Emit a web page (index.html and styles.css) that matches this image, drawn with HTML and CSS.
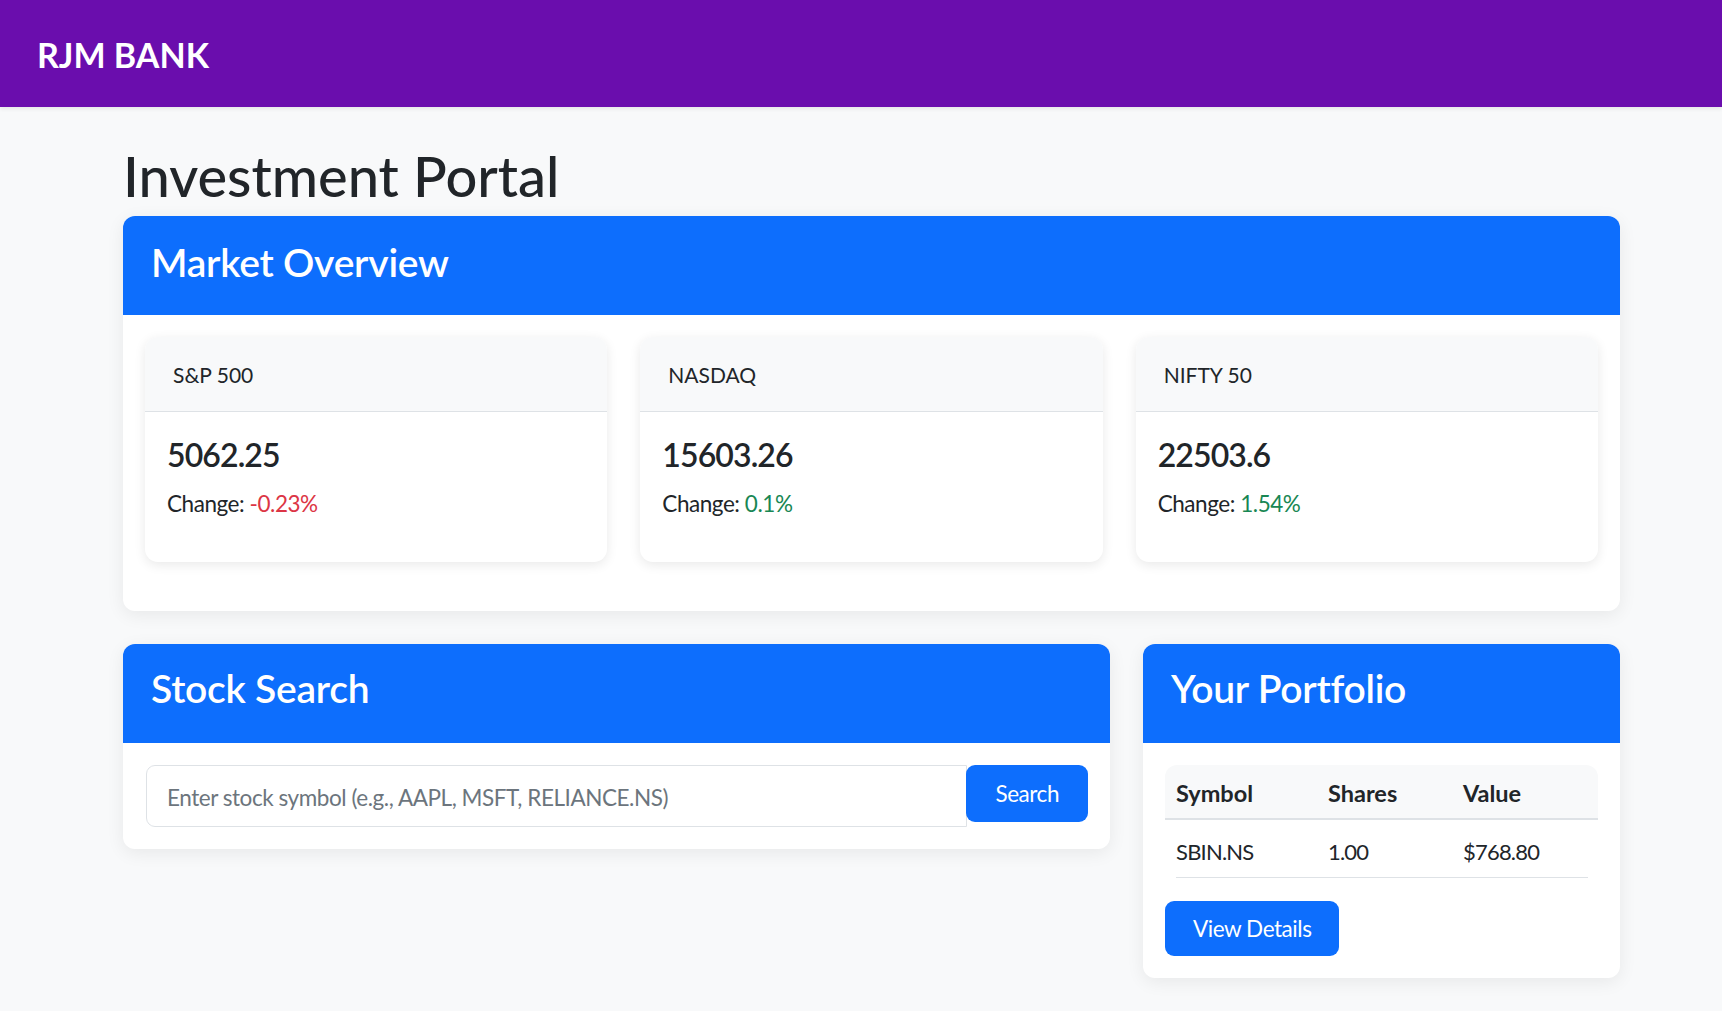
FILE: index.html
```html
<!DOCTYPE html>
<html lang="en">
<head>
<meta charset="utf-8">
<title>RJM BANK - Investment Portal</title>
<link rel="stylesheet" href="styles.css">
</head>
<body>
<nav class="navbar"><span class="brand">RJM BANK</span></nav>
<main class="page">
  <h1 class="page-title">Investment Portal</h1>

  <section class="panel">
    <header class="panel-head"><h2>Market Overview</h2></header>
    <div class="market-body">
      <div class="index-grid">
        <article class="index-card">
          <div class="index-head">S&amp;P 500</div>
          <div class="index-body">
            <div class="index-value">5062.25</div>
            <p class="index-change">Change: <span class="neg">-0.23%</span></p>
          </div>
        </article>
        <article class="index-card">
          <div class="index-head">NASDAQ</div>
          <div class="index-body">
            <div class="index-value">15603.26</div>
            <p class="index-change">Change: <span class="pos">0.1%</span></p>
          </div>
        </article>
        <article class="index-card">
          <div class="index-head">NIFTY 50</div>
          <div class="index-body">
            <div class="index-value">22503.6</div>
            <p class="index-change">Change: <span class="pos">1.54%</span></p>
          </div>
        </article>
      </div>
    </div>
  </section>

  <div class="lower-grid">
    <section class="panel">
      <header class="panel-head low"><h2>Stock Search</h2></header>
      <div class="search-body">
        <input class="search-input" type="text" placeholder="Enter stock symbol (e.g., AAPL, MSFT, RELIANCE.NS)">
        <button class="btn search-btn" type="button">Search</button>
      </div>
    </section>

    <section class="panel">
      <header class="panel-head low"><h2>Your Portfolio</h2></header>
      <div class="portfolio-body">
        <table class="holdings">
          <thead>
            <tr><th class="c1">Symbol</th><th class="c2">Shares</th><th class="c3">Value</th></tr>
          </thead>
          <tbody>
            <tr><td class="c1">SBIN.NS</td><td class="c2">1.00</td><td class="c3">$768.80</td></tr>
          </tbody>
        </table>
        <button class="btn details-btn" type="button">View Details</button>
      </div>
    </section>
  </div>
</main>
</body>
</html>
```

FILE: styles.css
```css
* { box-sizing: border-box; }

body {
  margin: 0;
  background: #f8f9fa;
  font-family: Lato, "Open Sans", sans-serif;
  font-size: 22.5px;
  color: #212529;
}

.navbar {
  height: 107px;
  background: #6a0dad;
  padding: 35px 0 0 37px;
  box-shadow: 0 2px 4px rgba(0, 0, 0, 0.08);
}

.brand {
  display: block;
  color: #fff;
  font-weight: 700;
  font-size: 34px;
  line-height: 40px;
}

.page {
  width: 1497px;
  margin-left: 123px;
  padding: 34.7px 0 30px;
}

.page-title {
  margin: 0 0 7px;
  font-size: 56px;
  line-height: 67.2px;
  font-weight: 500;
}

.panel {
  background: #fff;
  border-radius: 12px;
  box-shadow: 0 4px 18px rgba(0, 0, 0, 0.07);
  overflow: hidden;
}

.panel-head {
  background: #0d6efd;
  color: #fff;
  padding: 22px 28px 29px;
}

.panel-head.low {
  padding: 20px 28px 31px;
}

.panel-head h2 {
  margin: 0;
  font-size: 39px;
  line-height: 48px;
  font-weight: 600;
  letter-spacing: -0.25px;
}

.market-body {
  padding: 22px 22px 49px;
}

.index-grid {
  display: grid;
  grid-template-columns: repeat(3, 1fr);
  gap: 33px;
}

.index-card {
  background: #fff;
  border-radius: 13px;
  box-shadow: 0 3px 12px rgba(0, 0, 0, 0.09);
  overflow: hidden;
}

.index-head {
  background: #f8f9fa;
  padding: 22px 28px 20px;
  font-size: 21px;
  line-height: 32px;
  border-bottom: 1px solid #dee2e6;
}

.index-body {
  padding: 23px 22px 22px;
}

.index-value {
  font-size: 32px;
  line-height: 40px;
  font-weight: 600;
  letter-spacing: -0.9px;
}

.index-change {
  margin: 12px 0 19px;
  line-height: 34px;
  letter-spacing: -0.45px;
}

.neg { color: #dc3545; }
.pos { color: #198754; }

.lower-grid {
  display: grid;
  grid-template-columns: 987px 1fr;
  gap: 33px;
  margin-top: 33px;
  align-items: start;
}

.search-body {
  display: flex;
  align-items: flex-start;
  padding: 22px 22px 22px 23px;
}

.search-input {
  flex: 1;
  min-width: 0;
  height: 62px;
  border: 1px solid #dee2e6;
  border-radius: 9px 0 0 9px;
  padding: 3px 20px 0;
  font-family: inherit;
  font-size: 22.5px;
  letter-spacing: -0.45px;
  color: #212529;
  background: #fff;
  outline: none;
}

.search-input::placeholder {
  color: #6c757d;
}

.btn {
  border: 0;
  border-radius: 9px;
  background: #0d6efd;
  color: #fff;
  font-family: inherit;
  font-size: 22.5px;
  letter-spacing: -0.45px;
  cursor: pointer;
}

.search-btn {
  height: 57px;
  padding: 1px 29px 0;
  margin-left: -1px;
}

.portfolio-body {
  padding: 22px;
}

.holdings {
  width: 100%;
  border-collapse: separate;
  border-spacing: 0;
}

.holdings th {
  background: #f8f9fa;
  text-align: left;
  font-size: 23.5px;
  font-weight: 700;
  padding: 11px 11px 8px;
  line-height: 34px;
  border-bottom: 2px solid #dee2e6;
}

.holdings th.c1 { border-top-left-radius: 12px; }
.holdings th.c3 { border-top-right-radius: 12px; }

.holdings .c1 { width: 152px; }
.holdings .c2 { width: 135px; }

.holdings td {
  padding: 15px 11px 9px;
  font-size: 22px;
  letter-spacing: -0.8px;
  line-height: 34px;
  background-image: linear-gradient(#dee2e6, #dee2e6);
  background-repeat: no-repeat;
  background-size: 100% 1px;
  background-position: left bottom;
}

.holdings td.c1 {
  background-size: calc(100% - 11px) 1px;
  background-position: right bottom;
}

.holdings td.c3 {
  background-size: calc(100% - 10px) 1px;
  background-position: left bottom;
}

.details-btn {
  display: block;
  height: 55px;
  margin-top: 23px;
  padding: 1px 28px 0;
}
```
